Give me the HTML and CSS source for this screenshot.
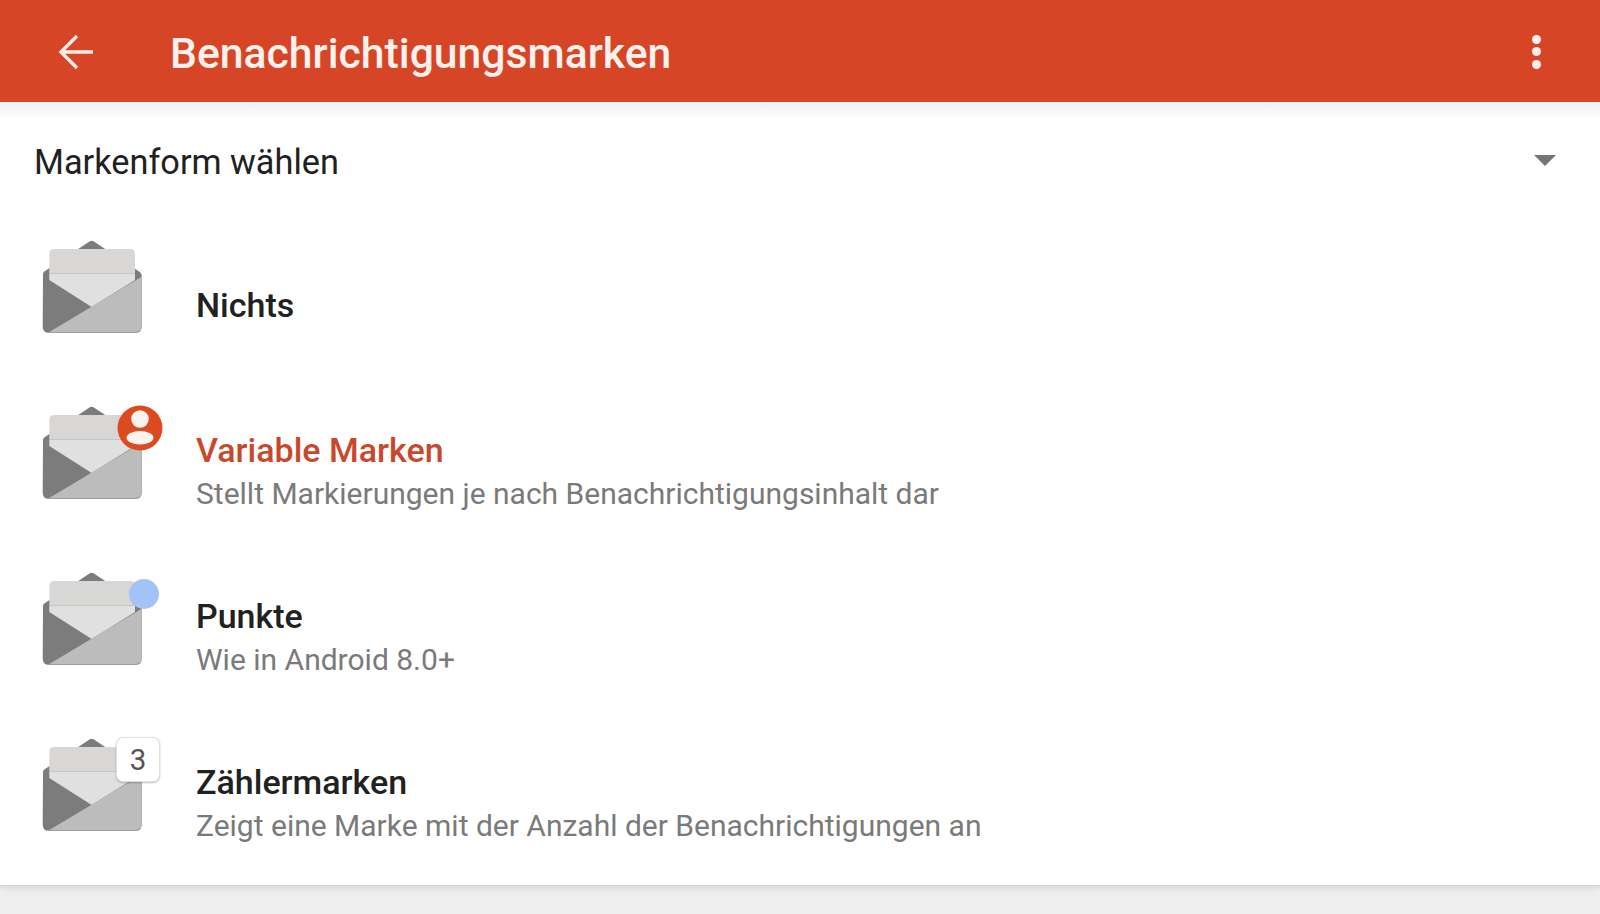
FILE: index.html
```html
<!DOCTYPE html>
<html lang="de">
<head>
<meta charset="utf-8">
<title>Benachrichtigungsmarken</title>
<link rel="stylesheet" href="styles.css">
</head>
<body>
<svg class="defs" width="0" height="0" aria-hidden="true">
  <defs>
    <symbol id="envelope" viewBox="0 0 110 100">
      <path d="M3 34 Q3 32 5 31 L48 2.5 Q51.7 -1 55.4 2.5 L98.4 31 Q101.7 33 101.7 36 L101.7 86.5 Q101.7 92.8 95.7 92.8 L8.7 92.8 Q2.7 92.8 2.7 86.5 Z" fill="#7c7c7c"/>
      <path d="M9.3 14 Q9.3 9 14 9 L90.3 9 Q95 9 95 14 L95 33.5 L9.3 33.5 Z" fill="#d8d7d6"/>
      <path d="M9.3 33.5 L95 33.5 L95 40 L51.7 67 L9.3 40 Z" fill="#e0e0e0"/>
      <path d="M9.3 92 L101.7 36.7 L101.7 86 Q101.7 92 95 92 Z" fill="#bcbcbc"/>
    </symbol>
  </defs>
</svg>
<header class="appbar">
  <svg class="back" viewBox="0 0 40 40" width="40" height="40" aria-hidden="true">
    <path d="M36 20 H4 M20 4 L4 20 L20 36" fill="none" stroke="#fcebe6" stroke-width="3.4"/>
  </svg>
  <h1 class="title">Benachrichtigungsmarken</h1>
  <div class="more" aria-hidden="true"><i></i><i></i><i></i></div>
</header>
<main class="panel">
  <div class="select">
    <span class="select-label">Markenform wählen</span>
    <span class="caret"></span>
  </div>
  <div class="row">
    <div class="icon"><svg class="env"><use href="#envelope"/></svg></div>
    <div class="text"><div class="name">Nichts</div></div>
  </div>
  <div class="row">
    <div class="icon">
      <svg class="env"><use href="#envelope"/></svg>
      <svg class="badge-person" viewBox="0 0 46 46" aria-hidden="true">
        <circle cx="23" cy="23" r="22.5" fill="#dc4a20"/>
        <circle cx="23" cy="14" r="8.8" fill="#fdf3ee"/>
        <ellipse cx="23" cy="32.7" rx="13.5" ry="6.8" fill="#fdf3ee"/>
      </svg>
    </div>
    <div class="text">
      <div class="name active">Variable Marken</div>
      <div class="desc">Stellt Markierungen je nach Benachrichtigungsinhalt dar</div>
    </div>
  </div>
  <div class="row">
    <div class="icon">
      <svg class="env"><use href="#envelope"/></svg>
      <span class="badge-dot"></span>
    </div>
    <div class="text">
      <div class="name">Punkte</div>
      <div class="desc">Wie in Android 8.0+</div>
    </div>
  </div>
  <div class="row">
    <div class="icon">
      <svg class="env"><use href="#envelope"/></svg>
      <span class="badge-count">3</span>
    </div>
    <div class="text">
      <div class="name">Zählermarken</div>
      <div class="desc">Zeigt eine Marke mit der Anzahl der Benachrichtigungen an</div>
    </div>
  </div>
</main>
</body>
</html>
```
FILE: styles.css
```css
* { box-sizing: border-box; }
html, body { margin: 0; height: 100%; }
body {
  height: 914px;
  overflow: hidden;
  background: #eeeeee;
  font-family: Roboto, "Noto Sans", sans-serif;
  color: #212121;
}
.defs { position: absolute; }
.appbar {
  height: 102px;
  background: #d64525;
  display: flex;
  align-items: center;
  padding-left: 57px;
  padding-right: 59px;
  position: relative;
  z-index: 1;
}
.back { flex: none; margin-right: 73px; margin-top: 2px; }
.title {
  margin: 0;
  padding-top: 3px;
  flex: 1;
  font-size: 42.7px;
  font-weight: 500;
  color: #fdf1ed;
}
.more { display: flex; flex-direction: column; gap: 3.5px; margin-top: 1px; }
.more i { width: 9px; height: 9px; border-radius: 50%; background: #fdf0ec; }
.panel {
  height: 783px;
  background: #fff;
  box-shadow: 0 1px 0 #d2d2d2, 0 3px 6px rgba(0,0,0,.1);
  background-image: linear-gradient(#f0f0f2, #ffffff 18px);
}
.select {
  height: 120px;
  padding: 0 44px 0 34px;
  display: flex;
  align-items: center;
  justify-content: space-between;
}
.select-label { font-size: 34.3px; color: #212121; }
.caret {
  width: 0; height: 0;
  margin-top: -3px;
  border-left: 11px solid transparent;
  border-right: 11px solid transparent;
  border-top: 11px solid #757575;
}
.row {
  height: 166px;
  display: flex;
  align-items: center;
  padding-left: 40px;
}
.icon {
  position: relative;
  width: 110px;
  height: 100px;
  margin-right: 46px;
  margin-bottom: 30px;
  flex: none;
}
.env { width: 110px; height: 100px; display: block; overflow: visible; }
.badge-person { position: absolute; left: 77px; top: -1.5px; width: 46px; height: 46px; }
.badge-dot {
  position: absolute;
  left: 89px; top: 6.5px;
  width: 30px; height: 30px;
  border-radius: 50%;
  background: #a3c3f8;
}
.badge-count {
  position: absolute;
  left: 76px; top: -1px;
  width: 44px; height: 45px;
  padding-top: 1px;
  border-radius: 7px;
  background: #fff;
  border: 1px solid #e0e0e0;
  box-shadow: 0 1px 2px rgba(0,0,0,.25);
  display: flex;
  align-items: center;
  justify-content: center;
  font-size: 29.5px;
  color: #555;
}
.name { font-size: 34px; font-weight: 500; color: #212121; line-height: 44px; }
.name.active { color: #c9482b; }
.desc { font-size: 30px; color: #7a7a7a; line-height: 44px; margin-bottom: -2px; }
```
